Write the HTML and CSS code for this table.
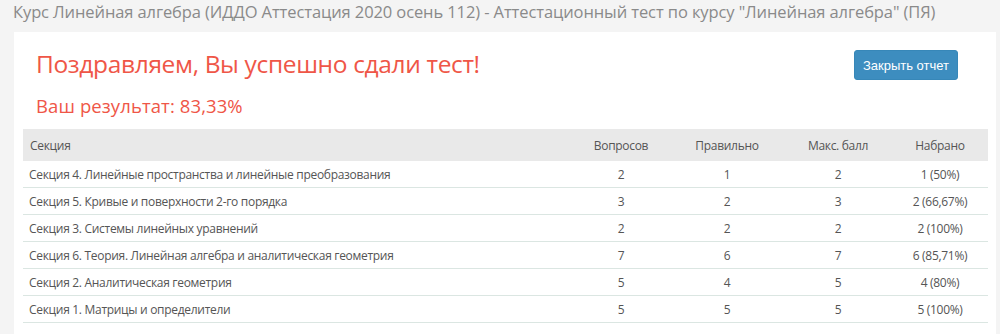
FILE: index.html
```html
<!DOCTYPE html>
<html lang="ru">
<head>
<meta charset="utf-8">
<link rel="stylesheet" href="styles.css">
</head>
<body>
<h1 class="page-title">Курс Линейная алгебра (ИДДО Аттестация 2020 осень 112) - Аттестационный тест по курсу "Линейная алгебра" (ПЯ)</h1>
<div class="card">
  <div class="card-head">
    <div class="results">
      <h2 class="congrats">Поздравляем, Вы успешно сдали тест!</h2>
      <div class="score">Ваш результат: 83,33%</div>
    </div>
    <button class="btn">Закрыть отчет</button>
  </div>
  <table class="report">
    <colgroup>
      <col class="c1"><col class="c2"><col class="c3"><col class="c4"><col class="c5">
    </colgroup>
    <thead>
      <tr><th class="left">Секция</th><th>Вопросов</th><th>Правильно</th><th>Макс. балл</th><th>Набрано</th></tr>
    </thead>
    <tbody>
      <tr><td class="left">Секция 4. Линейные пространства и линейные преобразования</td><td>2</td><td>1</td><td>2</td><td>1 (50%)</td></tr>
      <tr><td class="left">Секция 5. Кривые и поверхности 2-го порядка</td><td>3</td><td>2</td><td>3</td><td>2 (66,67%)</td></tr>
      <tr><td class="left">Секция 3. Системы линейных уравнений</td><td>2</td><td>2</td><td>2</td><td>2 (100%)</td></tr>
      <tr><td class="left">Секция 6. Теория. Линейная алгебра и аналитическая геометрия</td><td>7</td><td>6</td><td>7</td><td>6 (85,71%)</td></tr>
      <tr><td class="left">Секция 2. Аналитическая геометрия</td><td>5</td><td>4</td><td>5</td><td>4 (80%)</td></tr>
      <tr><td class="left">Секция 1. Матрицы и определители</td><td>5</td><td>5</td><td>5</td><td>5 (100%)</td></tr>
    </tbody>
  </table>
</div>
</body>
</html>
```

FILE: styles.css
```css
html, body {
  margin: 0;
  padding: 0;
  background: #f4f4f4;
  font-family: "Open Sans", "Liberation Sans", sans-serif;
}
body {
  padding: 0 4px 0 14px;
}
.page-title {
  margin: 0 0 0 -1px;
  height: 32px;
  line-height: 24px;
  font-size: 16.5px;
  letter-spacing: -0.1px;
  font-weight: 400;
  color: #8a8a8a;
  white-space: nowrap;
}
.card {
  background: #fff;
  padding: 15px 8px 12px 9px;
}
.card-head {
  display: flex;
  justify-content: space-between;
  align-items: flex-start;
  padding: 0 30px 0 13px;
}
.congrats {
  margin: 0;
  font-size: 24.5px;
  letter-spacing: -0.35px;
  line-height: 34px;
  font-weight: 400;
  color: #ef5647;
}
.score {
  margin-top: 13px;
  font-size: 18.5px;
  letter-spacing: 0.1px;
  line-height: 24px;
  color: #ef5647;
}
.btn {
  margin-top: 3px;
  height: 30px;
  width: 104px;
  background: #3d8dbf;
  color: #fff;
  border: 1px solid #3787b8;
  border-radius: 3px;
  font-family: "Liberation Sans", Arial, sans-serif;
  font-size: 13px;
  padding: 0;
}
.report {
  margin-top: 11px;
  width: 965px;
  border-collapse: collapse;
  table-layout: fixed;
  font-size: 12px;
  letter-spacing: -0.3px;
  color: #555;
}
.c1 { width: 549px; }
.c2 { width: 98px; }
.c3 { width: 114px; }
.c4 { width: 108px; }
.c5 { width: 96px; }
.report th {
  background: #e9e9e9;
  height: 32px;
  font-weight: 400;
  text-align: center;
  padding: 0;
}
.report td {
  height: 26px;
  text-align: center;
  padding: 0;
  border-bottom: 1px solid #dbe6e2;
}
.report .left {
  text-align: left;
  padding-left: 7px;
}
.report td.left {
  padding-left: 6px;
}
```
